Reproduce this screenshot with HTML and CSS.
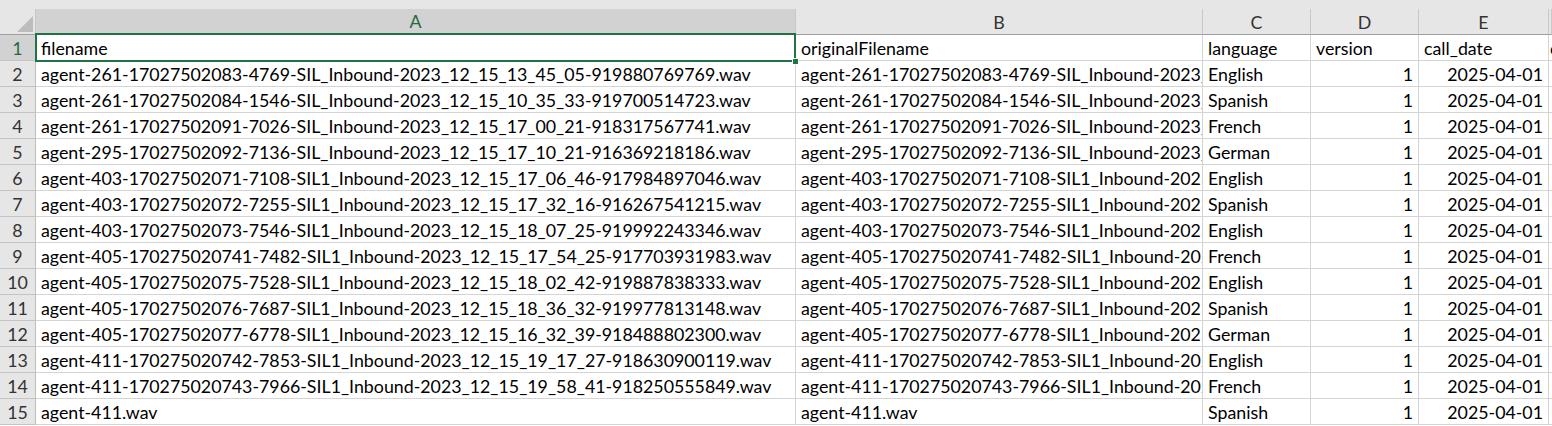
FILE: index.html
```html
<!DOCTYPE html>
<html>
<head>
<meta charset="utf-8">
<link rel="stylesheet" href="styles.css">
</head>
<body>
<div class="sheet">
  <div class="topstrip"></div>
  <div class="row head">
    <div class="corner"><svg width="36" height="26" viewBox="0 0 36 26"><polygon points="33,7 33,23 17,23" fill="#bdbdbd"/></svg></div>
    <div class="ch sel">A</div>
    <div class="ch">B</div>
    <div class="ch">C</div>
    <div class="ch">D</div>
    <div class="ch">E</div>
    <div class="ch last"></div>
  </div>
  <div class="row">
    <div class="rh sel">1</div>
    <div class="c">filename</div>
    <div class="c">originalFilename</div>
    <div class="c">language</div>
    <div class="c">version</div>
    <div class="c">call_date</div>
    <div class="c last">call_time</div>
  </div>
  <div class="row"><div class="rh">2</div><div class="c">agent-261-17027502083-4769-SIL_Inbound-2023_12_15_13_45_05-919880769769.wav</div><div class="c">agent-261-17027502083-4769-SIL_Inbound-2023_12_15_13_45_05-919880769769.wav</div><div class="c">English</div><div class="c num">1</div><div class="c num">2025-04-01</div><div class="c last"></div></div>
  <div class="row"><div class="rh">3</div><div class="c">agent-261-17027502084-1546-SIL_Inbound-2023_12_15_10_35_33-919700514723.wav</div><div class="c">agent-261-17027502084-1546-SIL_Inbound-2023_12_15_10_35_33-919700514723.wav</div><div class="c">Spanish</div><div class="c num">1</div><div class="c num">2025-04-01</div><div class="c last"></div></div>
  <div class="row"><div class="rh">4</div><div class="c">agent-261-17027502091-7026-SIL_Inbound-2023_12_15_17_00_21-918317567741.wav</div><div class="c">agent-261-17027502091-7026-SIL_Inbound-2023_12_15_17_00_21-918317567741.wav</div><div class="c">French</div><div class="c num">1</div><div class="c num">2025-04-01</div><div class="c last"></div></div>
  <div class="row"><div class="rh">5</div><div class="c">agent-295-17027502092-7136-SIL_Inbound-2023_12_15_17_10_21-916369218186.wav</div><div class="c">agent-295-17027502092-7136-SIL_Inbound-2023_12_15_17_10_21-916369218186.wav</div><div class="c">German</div><div class="c num">1</div><div class="c num">2025-04-01</div><div class="c last"></div></div>
  <div class="row"><div class="rh">6</div><div class="c">agent-403-17027502071-7108-SIL1_Inbound-2023_12_15_17_06_46-917984897046.wav</div><div class="c">agent-403-17027502071-7108-SIL1_Inbound-2023_12_15_17_06_46-917984897046.wav</div><div class="c">English</div><div class="c num">1</div><div class="c num">2025-04-01</div><div class="c last"></div></div>
  <div class="row"><div class="rh">7</div><div class="c">agent-403-17027502072-7255-SIL1_Inbound-2023_12_15_17_32_16-916267541215.wav</div><div class="c">agent-403-17027502072-7255-SIL1_Inbound-2023_12_15_17_32_16-916267541215.wav</div><div class="c">Spanish</div><div class="c num">1</div><div class="c num">2025-04-01</div><div class="c last"></div></div>
  <div class="row"><div class="rh">8</div><div class="c">agent-403-17027502073-7546-SIL1_Inbound-2023_12_15_18_07_25-919992243346.wav</div><div class="c">agent-403-17027502073-7546-SIL1_Inbound-2023_12_15_18_07_25-919992243346.wav</div><div class="c">English</div><div class="c num">1</div><div class="c num">2025-04-01</div><div class="c last"></div></div>
  <div class="row"><div class="rh">9</div><div class="c">agent-405-170275020741-7482-SIL1_Inbound-2023_12_15_17_54_25-917703931983.wav</div><div class="c">agent-405-170275020741-7482-SIL1_Inbound-2023_12_15_17_54_25-917703931983.wav</div><div class="c">French</div><div class="c num">1</div><div class="c num">2025-04-01</div><div class="c last"></div></div>
  <div class="row"><div class="rh">10</div><div class="c">agent-405-17027502075-7528-SIL1_Inbound-2023_12_15_18_02_42-919887838333.wav</div><div class="c">agent-405-17027502075-7528-SIL1_Inbound-2023_12_15_18_02_42-919887838333.wav</div><div class="c">English</div><div class="c num">1</div><div class="c num">2025-04-01</div><div class="c last"></div></div>
  <div class="row"><div class="rh">11</div><div class="c">agent-405-17027502076-7687-SIL1_Inbound-2023_12_15_18_36_32-919977813148.wav</div><div class="c">agent-405-17027502076-7687-SIL1_Inbound-2023_12_15_18_36_32-919977813148.wav</div><div class="c">Spanish</div><div class="c num">1</div><div class="c num">2025-04-01</div><div class="c last"></div></div>
  <div class="row"><div class="rh">12</div><div class="c">agent-405-17027502077-6778-SIL1_Inbound-2023_12_15_16_32_39-918488802300.wav</div><div class="c">agent-405-17027502077-6778-SIL1_Inbound-2023_12_15_16_32_39-918488802300.wav</div><div class="c">German</div><div class="c num">1</div><div class="c num">2025-04-01</div><div class="c last"></div></div>
  <div class="row"><div class="rh">13</div><div class="c">agent-411-170275020742-7853-SIL1_Inbound-2023_12_15_19_17_27-918630900119.wav</div><div class="c">agent-411-170275020742-7853-SIL1_Inbound-2023_12_15_19_17_27-918630900119.wav</div><div class="c">English</div><div class="c num">1</div><div class="c num">2025-04-01</div><div class="c last"></div></div>
  <div class="row"><div class="rh">14</div><div class="c">agent-411-170275020743-7966-SIL1_Inbound-2023_12_15_19_58_41-918250555849.wav</div><div class="c">agent-411-170275020743-7966-SIL1_Inbound-2023_12_15_19_58_41-918250555849.wav</div><div class="c">French</div><div class="c num">1</div><div class="c num">2025-04-01</div><div class="c last"></div></div>
  <div class="row"><div class="rh">15</div><div class="c">agent-411.wav</div><div class="c">agent-411.wav</div><div class="c">Spanish</div><div class="c num">1</div><div class="c num">2025-04-01</div><div class="c last"></div></div>
  <div class="selection"><div class="handle"></div></div>
</div>
</body>
</html>
```

FILE: styles.css
```css
* { box-sizing: border-box; }
html, body { margin: 0; padding: 0; background: #ffffff; overflow: hidden; }
.sheet {
  position: relative;
  width: 1552px;
  height: 426px;
  font-family: Lato, "Liberation Sans", sans-serif;
  font-size: 17.8px;
  color: #000;
  background: #fff;
}
.topstrip { height: 9px; background: #e6e6e6; }
.row {
  display: grid;
  grid-template-columns: 36px 760px 407px 108px 108px 130px 1fr;
  height: 26px;
}
.row > div {
  border-right: 1px solid #d4d4d4;
  border-bottom: 1px solid #d4d4d4;
  white-space: nowrap;
  overflow: hidden;
  display: flex;
  align-items: center;
}
.head > div {
  background: #e6e6e6;
  border-right: 1px solid #c8c8c8;
  border-bottom: 1px solid #9e9e9e;
  justify-content: center;
  color: #333;
}
.head .corner { padding: 0; display: block; }
.head .corner svg { display: block; }
.head .ch.sel { background: #d2d2d2; color: #1f6b3e; border-bottom: 2px solid #217346; }
.rh {
  background: #e6e6e6;
  justify-content: center;
  color: #333;
  border-right-color: #bdbdbd !important;
  border-bottom-color: #c4c4c4 !important;
}
.rh.sel { background: #d2d2d2; color: #1f6b3e; }
.c { padding: 0 4px 0 5px; }
.c.num { justify-content: flex-end; padding-right: 5px; }
.c.last { border-right: none !important; padding-left: 1px; }
.selection {
  position: absolute;
  left: 35px;
  top: 33px;
  width: 761px;
  height: 29px;
  border: 2px solid #217346;
  pointer-events: none;
}
.handle {
  position: absolute;
  right: -5px;
  bottom: -5px;
  width: 7px;
  height: 7px;
  background: #217346;
  border: 1px solid #fff;
}
```
